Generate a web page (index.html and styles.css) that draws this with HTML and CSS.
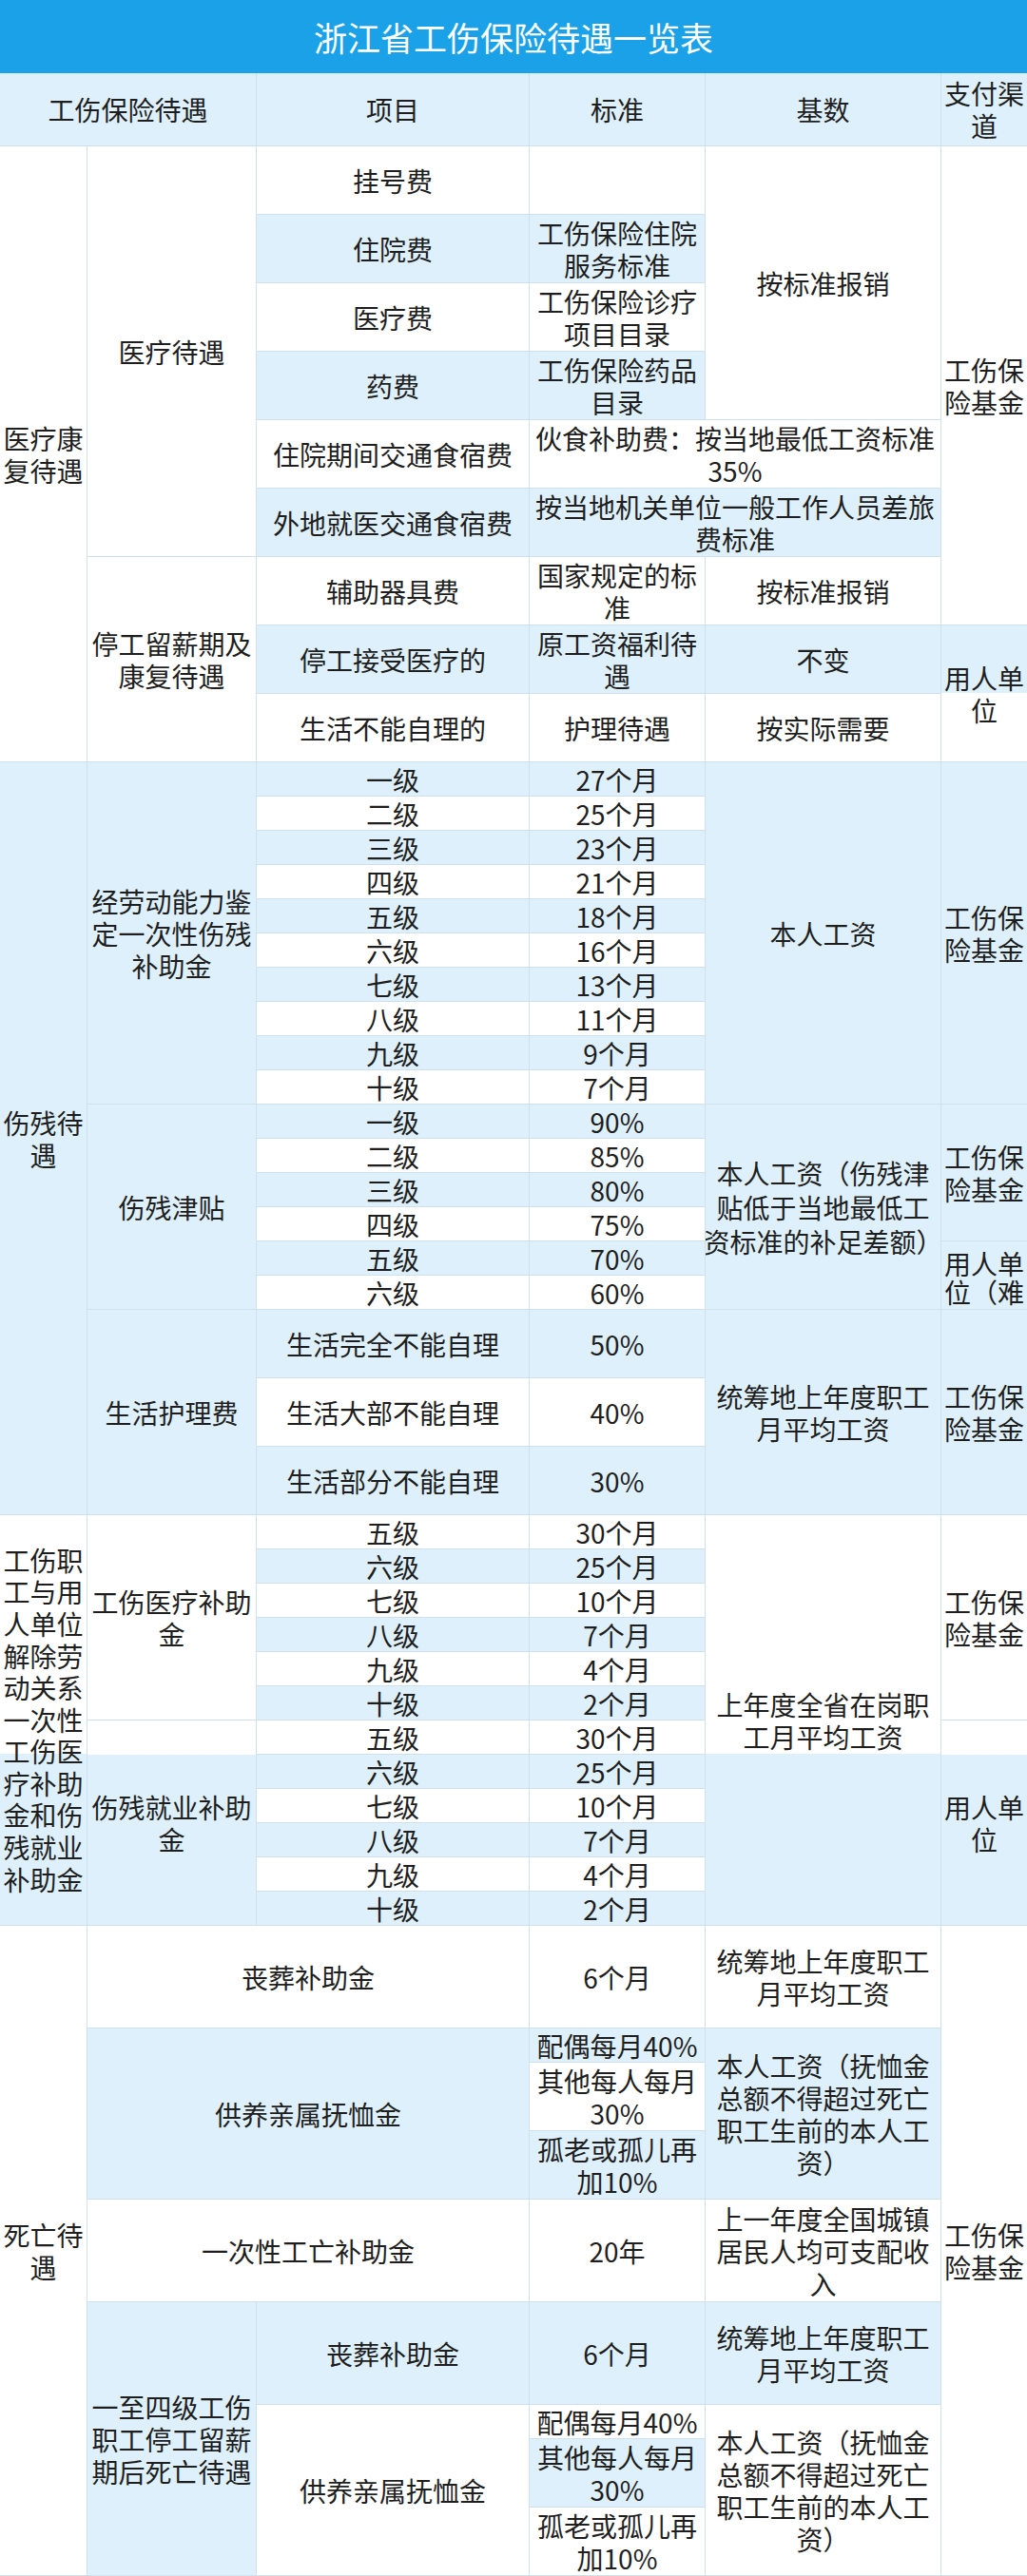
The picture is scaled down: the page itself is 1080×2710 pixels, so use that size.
FILE: index.html
```html
<!DOCTYPE html>
<html lang="zh-CN">
<head>
<meta charset="utf-8">
<title>浙江省工伤保险待遇一览表</title>
<link rel="stylesheet" href="styles.css">
</head>
<body>
<div class="title">浙江省工伤保险待遇一览表</div>
<div class="sheet">
  <!-- header -->
  <div class="c hd cs2">工伤保险待遇</div>
  <div class="c hd">项目</div>
  <div class="c hd">标准</div>
  <div class="c hd">基数</div>
  <div class="c hd">支付渠<br>道</div>

  <!-- 医疗康复待遇 -->
  <div class="c rs18">医疗康<br>复待遇</div>
  <div class="c rs12">医疗待遇</div>
  <div class="c rs2">挂号费</div>
  <div class="c rs2"></div>
  <div class="c rs8">按标准报销</div>
  <div class="c rs14">工伤保<br>险基金</div>

  <div class="c rs2 b">住院费</div>
  <div class="c rs2 b">工伤保险住院<br>服务标准</div>

  <div class="c rs2">医疗费</div>
  <div class="c rs2">工伤保险诊疗<br>项目目录</div>

  <div class="c rs2 b">药费</div>
  <div class="c rs2 b">工伤保险药品<br>目录</div>

  <div class="c rs2">住院期间交通食宿费</div>
  <div class="c rs2 cs2">伙食补助费：按当地最低工资标准<br>35%</div>

  <div class="c rs2 b">外地就医交通食宿费</div>
  <div class="c rs2 cs2 b">按当地机关单位一般工作人员差旅<br>费标准</div>

  <div class="c rs6">停工留薪期及<br>康复待遇</div>
  <div class="c rs2">辅助器具费</div>
  <div class="c rs2">国家规定的标<br>准</div>
  <div class="c rs2">按标准报销</div>

  <div class="c rs2 b">停工接受医疗的</div>
  <div class="c rs2 b">原工资福利待<br>遇</div>
  <div class="c rs2 b">不变</div>
  <div class="c rs4 g-half">用人单<br>位</div>

  <div class="c rs2">生活不能自理的</div>
  <div class="c rs2">护理待遇</div>
  <div class="c rs2">按实际需要</div>

  <!-- 伤残待遇 -->
  <div class="c rs22 b">伤残待<br>遇</div>
  <div class="c rs10 b">经劳动能力鉴<br>定一次性伤残<br>补助金</div>
  <div class="c b">一级</div><div class="c b">27个月</div>
  <div class="c rs10 b">本人工资</div>
  <div class="c rs10 b">工伤保<br>险基金</div>
  <div class="c">二级</div><div class="c">25个月</div>
  <div class="c b">三级</div><div class="c b">23个月</div>
  <div class="c">四级</div><div class="c">21个月</div>
  <div class="c b">五级</div><div class="c b">18个月</div>
  <div class="c">六级</div><div class="c">16个月</div>
  <div class="c b">七级</div><div class="c b">13个月</div>
  <div class="c">八级</div><div class="c">11个月</div>
  <div class="c b">九级</div><div class="c b">9个月</div>
  <div class="c">十级</div><div class="c">7个月</div>

  <div class="c rs6 b">伤残津贴</div>
  <div class="c b">一级</div><div class="c b">90%</div>
  <div class="c rs6 b loose">本人工资（伤残津<br>贴低于当地最低工<br>资标准的补足差额）</div>
  <div class="c rs4 b">工伤保<br>险基金</div>
  <div class="c">二级</div><div class="c">85%</div>
  <div class="c b">三级</div><div class="c b">80%</div>
  <div class="c">四级</div><div class="c">75%</div>
  <div class="c b">五级</div><div class="c b">70%</div>
  <div class="c rs2 b clip">用人单<br>位（难</div>
  <div class="c">六级</div><div class="c">60%</div>

  <div class="c rs6 b">生活护理费</div>
  <div class="c rs2 b">生活完全不能自理</div><div class="c rs2 b">50%</div>
  <div class="c rs6 b">统筹地上年度职工<br>月平均工资</div>
  <div class="c rs6 b">工伤保<br>险基金</div>
  <div class="c rs2">生活大部不能自理</div><div class="c rs2">40%</div>
  <div class="c rs2 b">生活部分不能自理</div><div class="c rs2 b">30%</div>

  <!-- 解除劳动关系 -->
  <div class="c rs12 g-w7 tight">工伤职<br>工与用<br>人单位<br>解除劳<br>动关系<br>一次性<br>工伤医<br>疗补助<br>金和伤<br>残就业<br>补助金</div>
  <div class="c rs6">工伤医疗补助<br>金</div>
  <div class="c">五级</div><div class="c">30个月</div>
  <div class="c rs12 g-w7">上年度全省在岗职<br>工月平均工资</div>
  <div class="c rs6">工伤保<br>险基金</div>
  <div class="c b">六级</div><div class="c b">25个月</div>
  <div class="c">七级</div><div class="c">10个月</div>
  <div class="c b">八级</div><div class="c b">7个月</div>
  <div class="c">九级</div><div class="c">4个月</div>
  <div class="c b">十级</div><div class="c b">2个月</div>
  <div class="c rs6 g-w1">伤残就业补助<br>金</div>
  <div class="c">五级</div><div class="c">30个月</div>
  <div class="c rs6 g-w1">用人单<br>位</div>
  <div class="c b">六级</div><div class="c b">25个月</div>
  <div class="c">七级</div><div class="c">10个月</div>
  <div class="c b">八级</div><div class="c b">7个月</div>
  <div class="c">九级</div><div class="c">4个月</div>
  <div class="c b">十级</div><div class="c b">2个月</div>

  <!-- 死亡待遇 -->
  <div class="c rs19">死亡待<br>遇</div>
  <div class="c cs2 rs3">丧葬补助金</div>
  <div class="c rs3">6个月</div>
  <div class="c rs3">统筹地上年度职工<br>月平均工资</div>
  <div class="c rs19">工伤保<br>险基金</div>

  <div class="c cs2 rs5 b">供养亲属抚恤金</div>
  <div class="c b">配偶每月40%</div>
  <div class="c rs5 b">本人工资（抚恤金<br>总额不得超过死亡<br>职工生前的本人工<br>资）</div>
  <div class="c rs2">其他每人每月<br>30%</div>
  <div class="c rs2 b">孤老或孤儿再<br>加10%</div>

  <div class="c cs2 rs3">一次性工亡补助金</div>
  <div class="c rs3">20年</div>
  <div class="c rs3">上一年度全国城镇<br>居民人均可支配收<br>入</div>

  <div class="c rs8 b">一至四级工伤<br>职工停工留薪<br>期后死亡待遇</div>
  <div class="c rs3 b">丧葬补助金</div>
  <div class="c rs3 b">6个月</div>
  <div class="c rs3 b">统筹地上年度职工<br>月平均工资</div>

  <div class="c rs5">供养亲属抚恤金</div>
  <div class="c">配偶每月40%</div>
  <div class="c rs5">本人工资（抚恤金<br>总额不得超过死亡<br>职工生前的本人工<br>资）</div>
  <div class="c rs2 b">其他每人每月<br>30%</div>
  <div class="c rs2">孤老或孤儿再<br>加10%</div>
</div>
</body>
</html>
```
FILE: styles.css
```css
* {
  box-sizing: border-box;
  margin: 0;
  padding: 0;
}

html,
body {
  background: #ffffff;
  overflow: hidden;
}

body {
  width: 1080px;
  font-family: "Noto Sans CJK SC", "Noto Sans", sans-serif;
  color: #1e1e1e;
}

.title {
  height: 77px;
  background: #1ba1e8;
  color: #ffffff;
  font-size: 35px;
  line-height: 40px;
  display: flex;
  align-items: center;
  justify-content: center;
}

.sheet {
  width: 1081px;
  display: grid;
  grid-template-columns: 92px 178px 287px 185px 248px 91px;
  grid-template-rows: 77px repeat(71, 36px);
  font-size: 28px;
  line-height: 34px;
}

.c {
  display: flex;
  align-items: center;
  justify-content: center;
  text-align: center;
  white-space: nowrap;
  background: #ffffff;
  border-right: 1px solid #cfe1ec;
  border-bottom: 1px solid #cfe1ec;
}

.hd {
  background: #ddf0fb;
}

.b {
  background: #ddf0fb;
}

.g-half {
  background: linear-gradient(#ddf0fb 50%, #ffffff 50%);
}

.g-w7 {
  background: linear-gradient(#ffffff 58.33%, #ddf0fb 58.33%);
}

.g-w1 {
  background: linear-gradient(#ffffff 16.67%, #ddf0fb 16.67%);
}

.clip {
  align-items: flex-start;
  padding-top: 8px;
  line-height: 30px;
}

.loose {
  line-height: 36px;
}

.tight {
  line-height: 33.6px;
}

.cs2 { grid-column: span 2; }
.rs2 { grid-row: span 2; }
.rs3 { grid-row: span 3; }
.rs4 { grid-row: span 4; }
.rs5 { grid-row: span 5; }
.rs6 { grid-row: span 6; }
.rs8 { grid-row: span 8; }
.rs10 { grid-row: span 10; }
.rs12 { grid-row: span 12; }
.rs14 { grid-row: span 14; }
.rs18 { grid-row: span 18; }
.rs19 { grid-row: span 19; }
.rs22 { grid-row: span 22; }
```
